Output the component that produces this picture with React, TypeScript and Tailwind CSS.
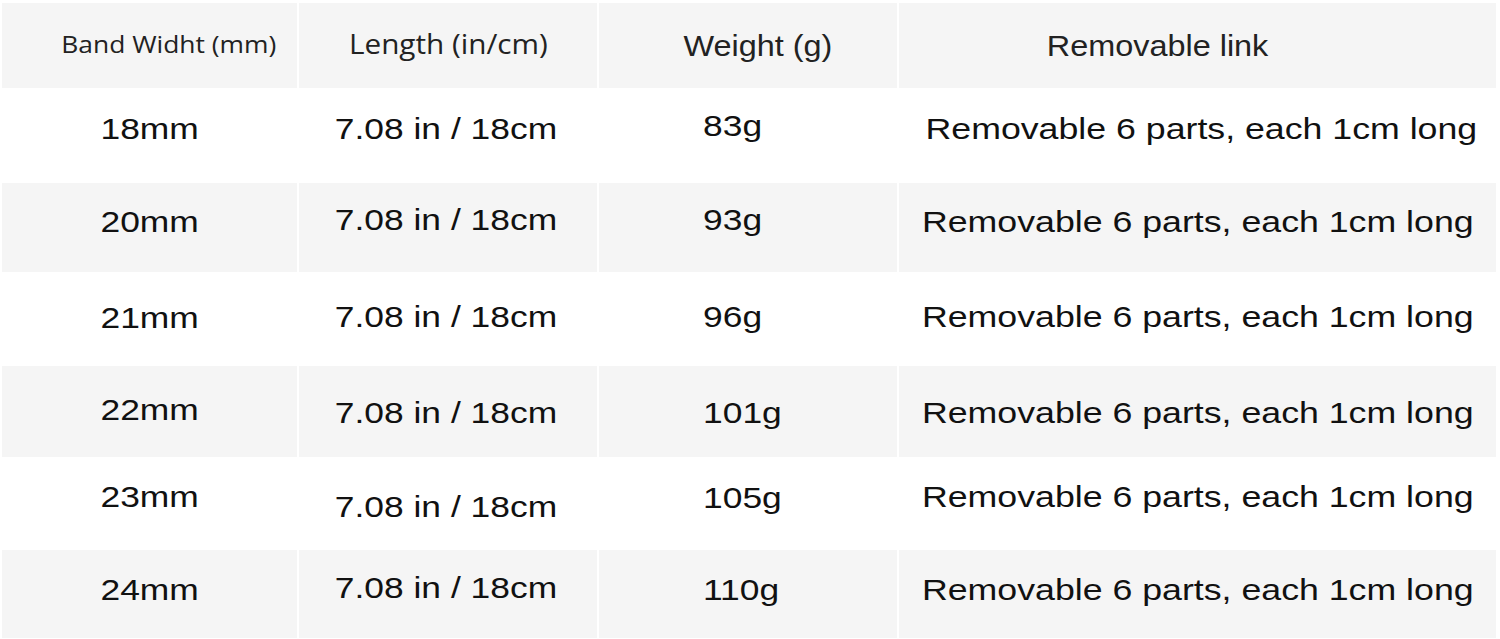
const headers = [
  { text: 'Band Widht (mm)', cls: "font-['Open_Sans',sans-serif] text-[24px] pl-[38px] pb-[4px]", sc: 'scale-x-[1.1]' },
  { text: 'Length (in/cm)', cls: "font-['Open_Sans',sans-serif] text-[27px] pb-[2px]", sc: 'scale-x-[1.1]' },
  { text: 'Weight (g)', cls: "font-['Liberation_Sans',Arial,sans-serif] text-[30px] pl-[20px]", sc: 'scale-x-[1.08]' },
  { text: 'Removable link', cls: "font-['Liberation_Sans',Arial,sans-serif] text-[30px] pr-[80px]", sc: 'scale-x-[1.08]' },
];

// each row: height, background, vertical padding that nudges the text like the original
const rows = [
  { h: 'h-[95px]', bg: 'bg-white', pad: ['pb-[14px]', 'pb-[14px]', 'pb-[20px]', 'pb-[14px]'], v: ['18mm', '83g'], first: true },
  { h: 'h-[89px]', bg: 'bg-[#f5f5f5]', pad: ['pb-[12px]', 'pb-[16px]', 'pb-[16px]', 'pb-[12px]'], v: ['20mm', '93g'] },
  { h: 'h-[94px]', bg: 'bg-white', pad: ['pb-[2px]', 'pb-[4px]', 'pb-[4px]', 'pb-[4px]'], v: ['21mm', '96g'] },
  { h: 'h-[91px]', bg: 'bg-[#f5f5f5]', pad: ['pb-[4px]', 'pt-[2px]', 'pt-[2px]', 'pt-[2px]'], v: ['22mm', '101g'] },
  { h: 'h-[93px]', bg: 'bg-white', pad: ['pb-[14px]', 'pt-[6px]', 'pb-[12px]', 'pb-[14px]'], v: ['23mm', '105g'] },
  { h: 'h-[88px]', bg: 'bg-[#f5f5f5]', pad: ['pb-[8px]', 'pb-[12px]', 'pb-[8px]', 'pb-[8px]'], v: ['24mm', '110g'] },
];

const data = "font-['Liberation_Sans',Arial,sans-serif] text-[30px] text-[#111] leading-none";

export default function App() {
  return (
    <div className="w-[1500px] h-[639px] bg-white pl-[2px] pt-[3px] overflow-hidden">
      <div className="grid grid-cols-[295px_298px_298px_597px] gap-x-[2px] h-[85px]">
        {headers.map((h) => (
          <div key={h.text} className={`bg-[#f5f5f5] flex items-center justify-center text-[#222] ${h.cls}`}>
            <span className={`inline-block ${h.sc}`}>{h.text}</span>
          </div>
        ))}
      </div>
      {rows.map((r) => (
        <div key={r.v[0]} className={`grid grid-cols-[295px_298px_298px_597px] gap-x-[2px] ${r.h}`}>
          <div className={`${r.bg} flex items-center justify-center ${r.pad[0]} ${data}`}>
            <span className="inline-block scale-x-[1.18]">{r.v[0]}</span>
          </div>
          <div className={`${r.bg} flex items-center justify-center ${r.pad[1]} ${data}`}>
            <span className="inline-block scale-x-[1.18] pr-[3px]">7.08 in / 18cm</span>
          </div>
          <div className={`${r.bg} flex items-center pl-[104px] ${r.pad[2]} ${data}`}>
            <span className="inline-block scale-x-[1.18] origin-left">{r.v[1]}</span>
          </div>
          <div className={`${r.bg} flex items-center justify-center ${r.pad[3]} ${data}`}>
            <span className={`inline-block scale-x-[1.19] ${r.first ? 'pl-[6px]' : ''}`}>Removable 6 parts, each 1cm long</span>
          </div>
        </div>
      ))}
    </div>
  );
}
